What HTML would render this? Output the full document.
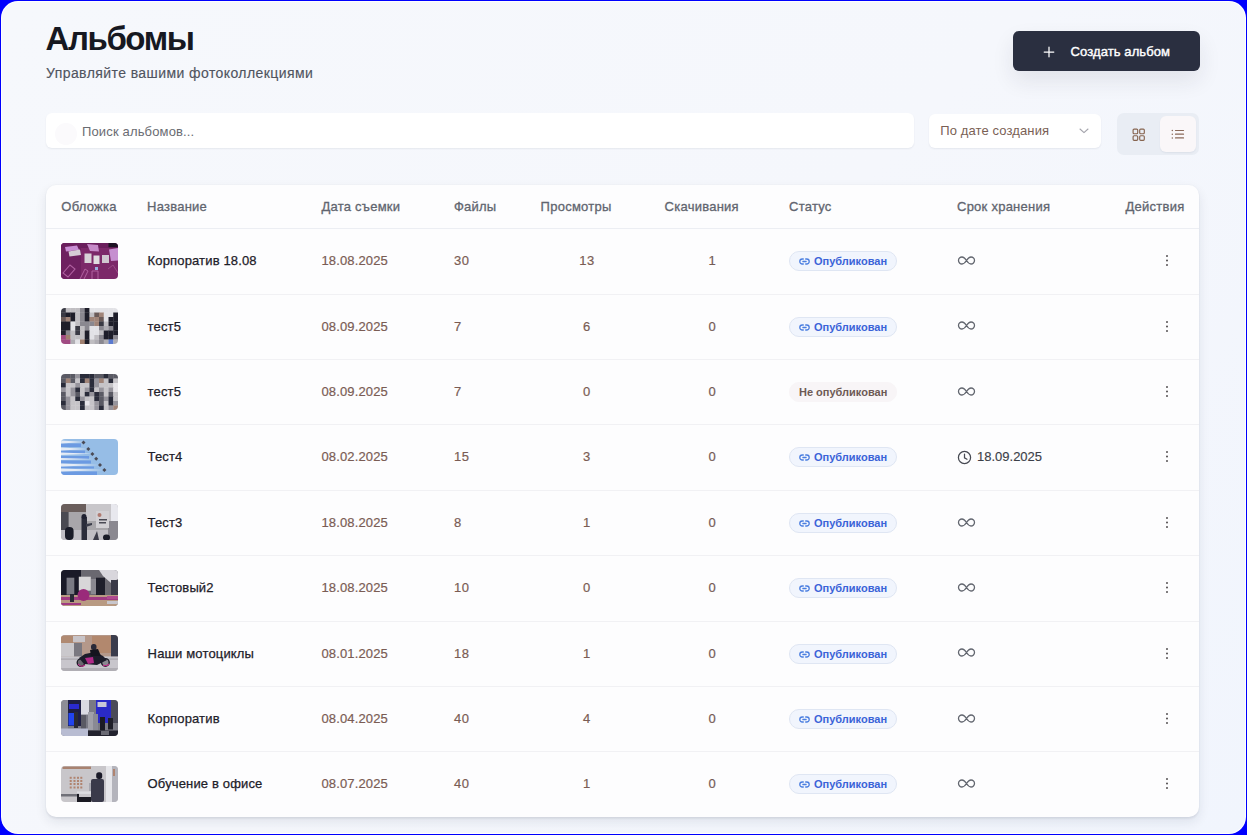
<!DOCTYPE html><html><head><meta charset="utf-8"><style>
*{box-sizing:border-box}
html,body{margin:0;padding:0;width:1247px;height:835px;overflow:hidden;background:#0000fe;font-family:"Liberation Sans",sans-serif}
.frame{position:absolute;left:1px;top:1px;width:1245px;height:833px;border-radius:17px;background:#fff}
.inner{position:absolute;left:2px;top:2px;width:1243px;height:831px;border-radius:16px;background:linear-gradient(135deg,#f6f8fc 0%,#f5f7fc 50%,#f1f5fd 100%)}
h1{position:absolute;margin:0;left:45.5px;top:20px;font-size:33px;font-weight:bold;color:#161821;letter-spacing:-1.4px;line-height:37px;white-space:nowrap}
.sub{position:absolute;left:46px;top:65px;font-size:14px;color:#50545f;-webkit-text-stroke:0.15px #50545f;letter-spacing:0.42px;line-height:16px;white-space:nowrap}
.btn{position:absolute;left:1012.5px;top:31.4px;width:187px;height:39.4px;border-radius:6px;background:#2a2f40;box-shadow:0 10px 22px rgba(30,35,60,.09)}
.btn .plus{position:absolute;left:30.5px;top:14.5px}
.btn span{position:absolute;left:58px;top:13px;color:#fff;font-size:13px;-webkit-text-stroke:0.4px #fff;letter-spacing:0.1px;line-height:15px;white-space:nowrap}
.search{position:absolute;left:46px;top:113px;width:868px;height:35px;border-radius:6px;background:#fff;box-shadow:0 1px 2px rgba(20,30,60,.07)}
.search .ph{position:absolute;left:36px;top:10.8px;font-size:13px;color:#6a6c72;letter-spacing:0.15px;line-height:15px;white-space:nowrap}
.search .ic{position:absolute;left:9px;top:10px;width:21.5px;height:21.5px;border-radius:50%;background:#fbfafc}
.sort{position:absolute;left:929.4px;top:113.7px;width:172px;height:34.3px;border-radius:6px;background:#fff;box-shadow:0 1px 2px rgba(20,30,60,.07)}
.sort span{position:absolute;left:10.8px;top:9.2px;font-size:13px;color:#7a5f55;letter-spacing:0.12px;line-height:15px;white-space:nowrap}
.sort .chev{position:absolute;left:150px;top:14px}
.toggle{position:absolute;left:1117px;top:113px;width:82px;height:42px;border-radius:7px;background:#e9edf4}
.toggle .grid{position:absolute;left:15px;top:14.5px}
.toggle .act{position:absolute;left:43px;top:3px;width:36px;height:36px;border-radius:6px;background:#faf7f9;box-shadow:0 1px 2px rgba(20,30,60,.06)}
.toggle .list{position:absolute;left:10.6px;top:13.3px}
.card{position:absolute;left:46px;top:185.4px;width:1153px;height:631.3px;border-radius:10px;background:#fdfdfe;box-shadow:0 2px 2px rgba(20,30,60,.06),0 5px 12px rgba(20,30,60,.09),0 0 2px rgba(20,30,60,.05);overflow:hidden}
.hdr{position:absolute;left:0;top:0;width:100%;height:43.9px;border-bottom:1px solid #eceef3}
.th{position:absolute;top:13.6px;font-size:13px;color:#61656f;-webkit-text-stroke:0.3px #61656f;letter-spacing:0.25px;line-height:15px;white-space:nowrap}
.row{position:absolute;left:0;width:100%;height:65.375px;border-bottom:1px solid #f1f1f4}
.row.last{border-bottom:none}
.thumb{position:absolute;left:15px;top:13.5px;width:57px;height:36px;border-radius:4px;overflow:hidden}
.thumb svg{display:block}
.td{position:absolute;top:24px;font-size:13px;line-height:15px;white-space:nowrap}
.nm{left:101.6px;color:#1d2029;-webkit-text-stroke:0.25px #1d2029;letter-spacing:0.15px}
.dt{left:275.4px;color:#7a5c54;-webkit-text-stroke:0.2px #7a5c54;letter-spacing:0.15px}
.fl{left:407.9px;color:#7a5c54;-webkit-text-stroke:0.2px #7a5c54;letter-spacing:0.6px}
.vw{left:479px;width:124px;text-align:center;color:#7a5c54;-webkit-text-stroke:0.2px #7a5c54;letter-spacing:0.6px}
.dl{left:604.5px;width:124px;text-align:center;color:#745c56;-webkit-text-stroke:0.2px #745c56;letter-spacing:0.6px}
.pill{position:absolute;left:743px;top:22px;height:20px;border-radius:10px;background:#f1f5fd;border:1px solid #dfe6f3;padding:0 9px 0 9px;white-space:nowrap}
.pill b{display:inline-block;font-size:11px;color:#3a63d8;line-height:18px;vertical-align:top}
.pill svg{display:inline-block;vertical-align:top;margin:6px 4px 0 0}
.pill.np{background:#f8f5f7;border-color:#f8f5f7}
.pill.np b{color:#6e5a55}
.inf{position:absolute;left:911px;top:26.8px;line-height:0}
.clk{position:absolute;left:911px;top:24.5px;line-height:0}
.exp{position:absolute;left:931px;top:24px;font-size:13px;color:#3c3f48;-webkit-text-stroke:0.15px #3c3f48;line-height:15px}
.dots{position:absolute;left:1118.5px;top:25px;line-height:0}

</style></head><body>
<div class="frame"></div><div class="inner"></div>
<h1>Альбомы</h1><div class="sub">Управляйте вашими фотоколлекциями</div>
<div class="btn"><svg class="plus" width="12" height="12" viewBox="0 0 12 12"><path d="M6 1.2 V10.8 M1.2 6 H10.8" stroke="#fff" stroke-width="1.25" stroke-linecap="round"/></svg><span>Создать альбом</span></div>
<div class="search"><div class="ic"></div><span class="ph">Поиск альбомов...</span></div>
<div class="sort"><span>По дате создания</span><svg class="chev" width="10" height="6" viewBox="0 0 10 6"><path d="M1 1 L5 4.6 L9 1" fill="none" stroke="#a4a4ac" stroke-width="1.1" stroke-linecap="round" stroke-linejoin="round"/></svg></div>
<div class="toggle"><svg class="grid" width="14" height="14" viewBox="0 0 14 14"><g fill="none" stroke="#86644f" stroke-width="1.15"><rect x="1.1" y="1.1" width="4.6" height="4.6" rx="1"/><rect x="7.7" y="1.1" width="4.6" height="4.6" rx="1"/><rect x="1.1" y="7.7" width="4.6" height="4.6" rx="1"/><rect x="7.7" y="7.7" width="4.6" height="4.6" rx="1"/></g></svg><div class="act"><svg class="list" width="14" height="10" viewBox="0 0 14 10"><g stroke="#8a6a5a" stroke-width="1.2" stroke-linecap="round"><path d="M4.5 1.5 H12.5 M4.5 5.2 H12.5 M4.5 8.9 H12.5"/></g><g fill="#8a6a5a"><circle cx="1.3" cy="1.5" r="0.75"/><circle cx="1.3" cy="5.2" r="0.75"/><circle cx="1.3" cy="8.9" r="0.75"/></g></svg></div></div>
<div class="card"><div class="hdr">
<span class="th" style="left:15.3px">Обложка</span>
<span class="th" style="left:101px">Название</span>
<span class="th" style="left:275.4px">Дата съемки</span>
<span class="th" style="left:407.9px">Файлы</span>
<span class="th" style="left:494.6px">Просмотры</span>
<span class="th" style="left:618.6px">Скачивания</span>
<span class="th" style="left:743px">Статус</span>
<span class="th" style="left:911px">Срок хранения</span>
<span class="th" style="right:14.5px">Действия</span>
</div>
<div class="row" style="top:43.900px">
<div class="thumb"><svg width="57" height="36" viewBox="0 0 57 36"><rect width="57" height="36" fill="#7c2869"/><rect width="20" height="36" fill="#6e2060"/><rect width="57" height="5" fill="#6a1e5c"/><path d="M4 4 L16 2.5 L18 7 L5 8.5Z" fill="#c98ed4"/><path d="M7.5 8.5 L19 6.5 L20 12 L8.5 13.5Z" fill="#d6ccd6"/><path d="M26 1 L37 2 L38 8.5 L29 8Z" fill="#c68ac8"/><rect x="23.5" y="10.5" width="7" height="9.5" fill="#d8d2d8"/><rect x="32.5" y="12.5" width="6" height="8.5" fill="#e0dce0"/><rect x="41" y="12" width="7" height="8" fill="#d0c6d0"/><path d="M48 6.5 L57 5 L57 17.5 L50 18Z" fill="#c690d0"/><rect x="47.5" y="0" width="9.5" height="4.2" fill="#1c1222"/><path d="M2 30 L9 22 L14 26 L7 34Z" fill="none" stroke="#b060a0" stroke-width="1.1"/><path d="M19 36 L24 26 L27 28 L23 36" fill="none" stroke="#b060a0" stroke-width="1"/><path d="M31 36 V28 H37 V36" fill="none" stroke="#b060a0" stroke-width="1"/><path d="M47 26 L52 22 L57 30" fill="none" stroke="#9a4a88" stroke-width="1"/><rect x="34" y="24" width="3" height="3" fill="#9ab0e0"/></svg></div>
<span class="td nm">Корпоратив 18.08</span><span class="td dt">18.08.2025</span><span class="td fl">30</span><span class="td vw">13</span><span class="td dl">1</span>
<span class="pill"><svg width="11" height="7" viewBox="0 0 11 7"><path d="M4.3 1 H3.3 A2.5 2.5 0 0 0 3.3 6 H4.3 M6.7 1 H7.7 A2.5 2.5 0 0 1 7.7 6 H6.7 M3.9 3.5 H7.1" fill="none" stroke="#4a7ee0" stroke-width="1.3" stroke-linecap="round"/></svg><b>Опубликован</b></span>
<span class="inf"><svg width="19" height="9" viewBox="0 0 19 9"><path d="M9.5 4.5 C8 2.2 6.8 1 5 1 A3.5 3.5 0 0 0 5 8 C6.8 8 8 6.8 9.5 4.5 C11 2.2 12.2 1 14 1 A3.5 3.5 0 0 1 14 8 C12.2 8 11 6.8 9.5 4.5Z" fill="none" stroke="#62666f" stroke-width="1.3"/></svg></span>
<span class="dots"><svg width="4" height="13" viewBox="0 0 4 13"><circle cx="2" cy="2" r="0.95" fill="#4a4648"/><circle cx="2" cy="6.5" r="0.95" fill="#4a4648"/><circle cx="2" cy="11" r="0.95" fill="#4a4648"/></svg></span>
</div>
<div class="row" style="top:109.275px">
<div class="thumb"><svg width="57" height="36" viewBox="0 0 57 36"><rect x="0.00" y="0.00" width="5.05" height="4.80" fill="#3a3a44"/><rect x="4.75" y="0.00" width="5.05" height="4.80" fill="#c0bec2"/><rect x="9.50" y="0.00" width="5.05" height="4.80" fill="#c0bec2"/><rect x="14.25" y="0.00" width="5.05" height="4.80" fill="#c0bec2"/><rect x="19.00" y="0.00" width="5.05" height="4.80" fill="#8a8890"/><rect x="23.75" y="0.00" width="5.05" height="4.80" fill="#1e1e2a"/><rect x="28.50" y="0.00" width="5.05" height="4.80" fill="#e2e2e6"/><rect x="33.25" y="0.00" width="5.05" height="4.80" fill="#e2e2e6"/><rect x="38.00" y="0.00" width="5.05" height="4.80" fill="#e2e2e6"/><rect x="42.75" y="0.00" width="5.05" height="4.80" fill="#e2e2e6"/><rect x="47.50" y="0.00" width="5.05" height="4.80" fill="#e2e2e6"/><rect x="52.25" y="0.00" width="5.05" height="4.80" fill="#e2e2e6"/><rect x="0.00" y="4.50" width="5.05" height="4.80" fill="#3a3a44"/><rect x="4.75" y="4.50" width="5.05" height="4.80" fill="#1e1e2a"/><rect x="9.50" y="4.50" width="5.05" height="4.80" fill="#1e1e2a"/><rect x="14.25" y="4.50" width="5.05" height="4.80" fill="#c0bec2"/><rect x="19.00" y="4.50" width="5.05" height="4.80" fill="#8a8890"/><rect x="23.75" y="4.50" width="5.05" height="4.80" fill="#1e1e2a"/><rect x="28.50" y="4.50" width="5.05" height="4.80" fill="#c0bec2"/><rect x="33.25" y="4.50" width="5.05" height="4.80" fill="#6a5a58"/><rect x="38.00" y="4.50" width="5.05" height="4.80" fill="#a08478"/><rect x="42.75" y="4.50" width="5.05" height="4.80" fill="#e2e2e6"/><rect x="47.50" y="4.50" width="5.05" height="4.80" fill="#e2e2e6"/><rect x="52.25" y="4.50" width="5.05" height="4.80" fill="#1e1e2a"/><rect x="0.00" y="9.00" width="5.05" height="4.80" fill="#6a5a58"/><rect x="4.75" y="9.00" width="5.05" height="4.80" fill="#a08478"/><rect x="9.50" y="9.00" width="5.05" height="4.80" fill="#1e1e2a"/><rect x="14.25" y="9.00" width="5.05" height="4.80" fill="#c0bec2"/><rect x="19.00" y="9.00" width="5.05" height="4.80" fill="#8a8890"/><rect x="23.75" y="9.00" width="5.05" height="4.80" fill="#1e1e2a"/><rect x="28.50" y="9.00" width="5.05" height="4.80" fill="#a08478"/><rect x="33.25" y="9.00" width="5.05" height="4.80" fill="#a08478"/><rect x="38.00" y="9.00" width="5.05" height="4.80" fill="#6a5a58"/><rect x="42.75" y="9.00" width="5.05" height="4.80" fill="#e2e2e6"/><rect x="47.50" y="9.00" width="5.05" height="4.80" fill="#1e1e2a"/><rect x="52.25" y="9.00" width="5.05" height="4.80" fill="#1e1e2a"/><rect x="0.00" y="13.50" width="5.05" height="4.80" fill="#1e1e2a"/><rect x="4.75" y="13.50" width="5.05" height="4.80" fill="#1e1e2a"/><rect x="9.50" y="13.50" width="5.05" height="4.80" fill="#e2e2e6"/><rect x="14.25" y="13.50" width="5.05" height="4.80" fill="#c0bec2"/><rect x="19.00" y="13.50" width="5.05" height="4.80" fill="#8a8890"/><rect x="23.75" y="13.50" width="5.05" height="4.80" fill="#8a8890"/><rect x="28.50" y="13.50" width="5.05" height="4.80" fill="#8a8890"/><rect x="33.25" y="13.50" width="5.05" height="4.80" fill="#a08478"/><rect x="38.00" y="13.50" width="5.05" height="4.80" fill="#3a3a44"/><rect x="42.75" y="13.50" width="5.05" height="4.80" fill="#c0bec2"/><rect x="47.50" y="13.50" width="5.05" height="4.80" fill="#1e1e2a"/><rect x="52.25" y="13.50" width="5.05" height="4.80" fill="#1e1e2a"/><rect x="0.00" y="18.00" width="5.05" height="4.80" fill="#1e1e2a"/><rect x="4.75" y="18.00" width="5.05" height="4.80" fill="#1e1e2a"/><rect x="9.50" y="18.00" width="5.05" height="4.80" fill="#e2e2e6"/><rect x="14.25" y="18.00" width="5.05" height="4.80" fill="#3a3a44"/><rect x="19.00" y="18.00" width="5.05" height="4.80" fill="#c0bec2"/><rect x="23.75" y="18.00" width="5.05" height="4.80" fill="#8a8890"/><rect x="28.50" y="18.00" width="5.05" height="4.80" fill="#e2e2e6"/><rect x="33.25" y="18.00" width="5.05" height="4.80" fill="#e2e2e6"/><rect x="38.00" y="18.00" width="5.05" height="4.80" fill="#8a8890"/><rect x="42.75" y="18.00" width="5.05" height="4.80" fill="#b0aeb4"/><rect x="47.50" y="18.00" width="5.05" height="4.80" fill="#8a8890"/><rect x="52.25" y="18.00" width="5.05" height="4.80" fill="#1e1e2a"/><rect x="0.00" y="22.50" width="5.05" height="4.80" fill="#1e1e2a"/><rect x="4.75" y="22.50" width="5.05" height="4.80" fill="#8a8890"/><rect x="9.50" y="22.50" width="5.05" height="4.80" fill="#c0bec2"/><rect x="14.25" y="22.50" width="5.05" height="4.80" fill="#3a3a44"/><rect x="19.00" y="22.50" width="5.05" height="4.80" fill="#c0bec2"/><rect x="23.75" y="22.50" width="5.05" height="4.80" fill="#1e1e2a"/><rect x="28.50" y="22.50" width="5.05" height="4.80" fill="#e2e2e6"/><rect x="33.25" y="22.50" width="5.05" height="4.80" fill="#e2e2e6"/><rect x="38.00" y="22.50" width="5.05" height="4.80" fill="#c0bec2"/><rect x="42.75" y="22.50" width="5.05" height="4.80" fill="#1e1e2a"/><rect x="47.50" y="22.50" width="5.05" height="4.80" fill="#1e1e2a"/><rect x="52.25" y="22.50" width="5.05" height="4.80" fill="#1e1e2a"/><rect x="0.00" y="27.00" width="5.05" height="4.80" fill="#a04a82"/><rect x="4.75" y="27.00" width="5.05" height="4.80" fill="#a08070"/><rect x="9.50" y="27.00" width="5.05" height="4.80" fill="#c0bec2"/><rect x="14.25" y="27.00" width="5.05" height="4.80" fill="#c0bec2"/><rect x="19.00" y="27.00" width="5.05" height="4.80" fill="#c0bec2"/><rect x="23.75" y="27.00" width="5.05" height="4.80" fill="#1e1e2a"/><rect x="28.50" y="27.00" width="5.05" height="4.80" fill="#e2e2e6"/><rect x="33.25" y="27.00" width="5.05" height="4.80" fill="#c0bec2"/><rect x="38.00" y="27.00" width="5.05" height="4.80" fill="#8a8890"/><rect x="42.75" y="27.00" width="5.05" height="4.80" fill="#1e1e2a"/><rect x="47.50" y="27.00" width="5.05" height="4.80" fill="#1e1e2a"/><rect x="52.25" y="27.00" width="5.05" height="4.80" fill="#8a8890"/><rect x="0.00" y="31.50" width="5.05" height="4.80" fill="#a04a82"/><rect x="4.75" y="31.50" width="5.05" height="4.80" fill="#a04a82"/><rect x="9.50" y="31.50" width="5.05" height="4.80" fill="#b0aeb4"/><rect x="14.25" y="31.50" width="5.05" height="4.80" fill="#e2e2e6"/><rect x="19.00" y="31.50" width="5.05" height="4.80" fill="#a08070"/><rect x="23.75" y="31.50" width="5.05" height="4.80" fill="#1e1e2a"/><rect x="28.50" y="31.50" width="5.05" height="4.80" fill="#c0bec2"/><rect x="33.25" y="31.50" width="5.05" height="4.80" fill="#b0aeb4"/><rect x="38.00" y="31.50" width="5.05" height="4.80" fill="#8a8890"/><rect x="42.75" y="31.50" width="5.05" height="4.80" fill="#b0aeb4"/><rect x="47.50" y="31.50" width="5.05" height="4.80" fill="#5a7ad0"/><rect x="52.25" y="31.50" width="5.05" height="4.80" fill="#b0aeb4"/></svg></div>
<span class="td nm">тест5</span><span class="td dt">08.09.2025</span><span class="td fl">7</span><span class="td vw">6</span><span class="td dl">0</span>
<span class="pill"><svg width="11" height="7" viewBox="0 0 11 7"><path d="M4.3 1 H3.3 A2.5 2.5 0 0 0 3.3 6 H4.3 M6.7 1 H7.7 A2.5 2.5 0 0 1 7.7 6 H6.7 M3.9 3.5 H7.1" fill="none" stroke="#4a7ee0" stroke-width="1.3" stroke-linecap="round"/></svg><b>Опубликован</b></span>
<span class="inf"><svg width="19" height="9" viewBox="0 0 19 9"><path d="M9.5 4.5 C8 2.2 6.8 1 5 1 A3.5 3.5 0 0 0 5 8 C6.8 8 8 6.8 9.5 4.5 C11 2.2 12.2 1 14 1 A3.5 3.5 0 0 1 14 8 C12.2 8 11 6.8 9.5 4.5Z" fill="none" stroke="#62666f" stroke-width="1.3"/></svg></span>
<span class="dots"><svg width="4" height="13" viewBox="0 0 4 13"><circle cx="2" cy="2" r="0.95" fill="#4a4648"/><circle cx="2" cy="6.5" r="0.95" fill="#4a4648"/><circle cx="2" cy="11" r="0.95" fill="#4a4648"/></svg></span>
</div>
<div class="row" style="top:174.650px">
<div class="thumb"><svg width="57" height="36" viewBox="0 0 57 36"><rect x="0.00" y="0.00" width="5.05" height="4.80" fill="#5a5a64"/><rect x="4.75" y="0.00" width="5.05" height="4.80" fill="#5a5a64"/><rect x="9.50" y="0.00" width="5.05" height="4.80" fill="#5a5a64"/><rect x="14.25" y="0.00" width="5.05" height="4.80" fill="#96949c"/><rect x="19.00" y="0.00" width="5.05" height="4.80" fill="#2a2c3a"/><rect x="23.75" y="0.00" width="5.05" height="4.80" fill="#2a2c3a"/><rect x="28.50" y="0.00" width="5.05" height="4.80" fill="#2a2c3a"/><rect x="33.25" y="0.00" width="5.05" height="4.80" fill="#5a5a64"/><rect x="38.00" y="0.00" width="5.05" height="4.80" fill="#5a5a64"/><rect x="42.75" y="0.00" width="5.05" height="4.80" fill="#2a2c3a"/><rect x="47.50" y="0.00" width="5.05" height="4.80" fill="#5a5a64"/><rect x="52.25" y="0.00" width="5.05" height="4.80" fill="#5a5a64"/><rect x="0.00" y="4.50" width="5.05" height="4.80" fill="#5a5a64"/><rect x="4.75" y="4.50" width="5.05" height="4.80" fill="#a08478"/><rect x="9.50" y="4.50" width="5.05" height="4.80" fill="#5a5a64"/><rect x="14.25" y="4.50" width="5.05" height="4.80" fill="#c6c4c8"/><rect x="19.00" y="4.50" width="5.05" height="4.80" fill="#2a2c3a"/><rect x="23.75" y="4.50" width="5.05" height="4.80" fill="#a08478"/><rect x="28.50" y="4.50" width="5.05" height="4.80" fill="#2a2c3a"/><rect x="33.25" y="4.50" width="5.05" height="4.80" fill="#96949c"/><rect x="38.00" y="4.50" width="5.05" height="4.80" fill="#a08478"/><rect x="42.75" y="4.50" width="5.05" height="4.80" fill="#c6c4c8"/><rect x="47.50" y="4.50" width="5.05" height="4.80" fill="#2a2c3a"/><rect x="52.25" y="4.50" width="5.05" height="4.80" fill="#c6c4c8"/><rect x="0.00" y="9.00" width="5.05" height="4.80" fill="#2a2c3a"/><rect x="4.75" y="9.00" width="5.05" height="4.80" fill="#c6c4c8"/><rect x="9.50" y="9.00" width="5.05" height="4.80" fill="#c6c4c8"/><rect x="14.25" y="9.00" width="5.05" height="4.80" fill="#96949c"/><rect x="19.00" y="9.00" width="5.05" height="4.80" fill="#c6c4c8"/><rect x="23.75" y="9.00" width="5.05" height="4.80" fill="#c6c4c8"/><rect x="28.50" y="9.00" width="5.05" height="4.80" fill="#2a2c3a"/><rect x="33.25" y="9.00" width="5.05" height="4.80" fill="#96949c"/><rect x="38.00" y="9.00" width="5.05" height="4.80" fill="#c6c4c8"/><rect x="42.75" y="9.00" width="5.05" height="4.80" fill="#c6c4c8"/><rect x="47.50" y="9.00" width="5.05" height="4.80" fill="#c6c4c8"/><rect x="52.25" y="9.00" width="5.05" height="4.80" fill="#e8e6ea"/><rect x="0.00" y="13.50" width="5.05" height="4.80" fill="#96949c"/><rect x="4.75" y="13.50" width="5.05" height="4.80" fill="#c6c4c8"/><rect x="9.50" y="13.50" width="5.05" height="4.80" fill="#96949c"/><rect x="14.25" y="13.50" width="5.05" height="4.80" fill="#2a2c3a"/><rect x="19.00" y="13.50" width="5.05" height="4.80" fill="#c6c4c8"/><rect x="23.75" y="13.50" width="5.05" height="4.80" fill="#96949c"/><rect x="28.50" y="13.50" width="5.05" height="4.80" fill="#2a2c3a"/><rect x="33.25" y="13.50" width="5.05" height="4.80" fill="#c6c4c8"/><rect x="38.00" y="13.50" width="5.05" height="4.80" fill="#96949c"/><rect x="42.75" y="13.50" width="5.05" height="4.80" fill="#c6c4c8"/><rect x="47.50" y="13.50" width="5.05" height="4.80" fill="#96949c"/><rect x="52.25" y="13.50" width="5.05" height="4.80" fill="#e8e6ea"/><rect x="0.00" y="18.00" width="5.05" height="4.80" fill="#5a5a64"/><rect x="4.75" y="18.00" width="5.05" height="4.80" fill="#c6c4c8"/><rect x="9.50" y="18.00" width="5.05" height="4.80" fill="#96949c"/><rect x="14.25" y="18.00" width="5.05" height="4.80" fill="#5a5a64"/><rect x="19.00" y="18.00" width="5.05" height="4.80" fill="#c6c4c8"/><rect x="23.75" y="18.00" width="5.05" height="4.80" fill="#2a2c3a"/><rect x="28.50" y="18.00" width="5.05" height="4.80" fill="#96949c"/><rect x="33.25" y="18.00" width="5.05" height="4.80" fill="#2a2c3a"/><rect x="38.00" y="18.00" width="5.05" height="4.80" fill="#5a5a64"/><rect x="42.75" y="18.00" width="5.05" height="4.80" fill="#c6c4c8"/><rect x="47.50" y="18.00" width="5.05" height="4.80" fill="#5a5a64"/><rect x="52.25" y="18.00" width="5.05" height="4.80" fill="#c6c4c8"/><rect x="0.00" y="22.50" width="5.05" height="4.80" fill="#5a5a64"/><rect x="4.75" y="22.50" width="5.05" height="4.80" fill="#96949c"/><rect x="9.50" y="22.50" width="5.05" height="4.80" fill="#c6c4c8"/><rect x="14.25" y="22.50" width="5.05" height="4.80" fill="#2a2c3a"/><rect x="19.00" y="22.50" width="5.05" height="4.80" fill="#96949c"/><rect x="23.75" y="22.50" width="5.05" height="4.80" fill="#c6c4c8"/><rect x="28.50" y="22.50" width="5.05" height="4.80" fill="#c6c4c8"/><rect x="33.25" y="22.50" width="5.05" height="4.80" fill="#2a2c3a"/><rect x="38.00" y="22.50" width="5.05" height="4.80" fill="#5a5a64"/><rect x="42.75" y="22.50" width="5.05" height="4.80" fill="#96949c"/><rect x="47.50" y="22.50" width="5.05" height="4.80" fill="#2a2c3a"/><rect x="52.25" y="22.50" width="5.05" height="4.80" fill="#c6c4c8"/><rect x="0.00" y="27.00" width="5.05" height="4.80" fill="#2a2c3a"/><rect x="4.75" y="27.00" width="5.05" height="4.80" fill="#96949c"/><rect x="9.50" y="27.00" width="5.05" height="4.80" fill="#c6c4c8"/><rect x="14.25" y="27.00" width="5.05" height="4.80" fill="#c6c4c8"/><rect x="19.00" y="27.00" width="5.05" height="4.80" fill="#2a2c3a"/><rect x="23.75" y="27.00" width="5.05" height="4.80" fill="#e8e6ea"/><rect x="28.50" y="27.00" width="5.05" height="4.80" fill="#c6c4c8"/><rect x="33.25" y="27.00" width="5.05" height="4.80" fill="#96949c"/><rect x="38.00" y="27.00" width="5.05" height="4.80" fill="#5a5a64"/><rect x="42.75" y="27.00" width="5.05" height="4.80" fill="#c6c4c8"/><rect x="47.50" y="27.00" width="5.05" height="4.80" fill="#2a2c3a"/><rect x="52.25" y="27.00" width="5.05" height="4.80" fill="#96949c"/><rect x="0.00" y="31.50" width="5.05" height="4.80" fill="#5a5a64"/><rect x="4.75" y="31.50" width="5.05" height="4.80" fill="#96949c"/><rect x="9.50" y="31.50" width="5.05" height="4.80" fill="#c6c4c8"/><rect x="14.25" y="31.50" width="5.05" height="4.80" fill="#c6c4c8"/><rect x="19.00" y="31.50" width="5.05" height="4.80" fill="#2a2c3a"/><rect x="23.75" y="31.50" width="5.05" height="4.80" fill="#c6c4c8"/><rect x="28.50" y="31.50" width="5.05" height="4.80" fill="#c6c4c8"/><rect x="33.25" y="31.50" width="5.05" height="4.80" fill="#96949c"/><rect x="38.00" y="31.50" width="5.05" height="4.80" fill="#2a2c3a"/><rect x="42.75" y="31.50" width="5.05" height="4.80" fill="#c6c4c8"/><rect x="47.50" y="31.50" width="5.05" height="4.80" fill="#96949c"/><rect x="52.25" y="31.50" width="5.05" height="4.80" fill="#a08478"/></svg></div>
<span class="td nm">тест5</span><span class="td dt">08.09.2025</span><span class="td fl">7</span><span class="td vw">0</span><span class="td dl">0</span>
<span class="pill np"><b>Не опубликован</b></span>
<span class="inf"><svg width="19" height="9" viewBox="0 0 19 9"><path d="M9.5 4.5 C8 2.2 6.8 1 5 1 A3.5 3.5 0 0 0 5 8 C6.8 8 8 6.8 9.5 4.5 C11 2.2 12.2 1 14 1 A3.5 3.5 0 0 1 14 8 C12.2 8 11 6.8 9.5 4.5Z" fill="none" stroke="#62666f" stroke-width="1.3"/></svg></span>
<span class="dots"><svg width="4" height="13" viewBox="0 0 4 13"><circle cx="2" cy="2" r="0.95" fill="#4a4648"/><circle cx="2" cy="6.5" r="0.95" fill="#4a4648"/><circle cx="2" cy="11" r="0.95" fill="#4a4648"/></svg></span>
</div>
<div class="row" style="top:240.025px">
<div class="thumb"><svg width="57" height="36" viewBox="0 0 57 36"><rect width="57" height="36" fill="#96bde6"/><rect x="0" y="4.5" width="20" height="3.5" fill="#6c9ae2"/><rect x="0" y="11.5" width="24" height="3" fill="#6c9ae2"/><rect x="0" y="17" width="28" height="3" fill="#6c9ae2"/><rect x="0" y="21.5" width="30" height="3" fill="#6c9ae2"/><rect x="0" y="27.5" width="33" height="2" fill="#6c9ae2"/><rect x="0" y="32.5" width="36" height="3.5" fill="#6c9ae2"/><path d="M0 1.5 L23 3.0 L0 4.5Z" fill="#e6ecf6"/><path d="M0 8.5 L27 10.0 L0 11.5Z" fill="#e6ecf6"/><path d="M0 13.5 L31 14.75 L0 16.0Z" fill="#e6ecf6"/><path d="M0 19 L33 20.0 L0 21Z" fill="#e6ecf6"/><path d="M0 24.5 L38 26.0 L0 27.5Z" fill="#e6ecf6"/><path d="M0 29.5 L43 31.0 L0 32.5Z" fill="#e6ecf6"/><path d="M20.5 3.4 L22.5 1.4 L24.5 3.4 L22.5 5.4Z" fill="#4a4a55"/><path d="M25.3 9.9 L27.3 7.9 L29.3 9.9 L27.3 11.9Z" fill="#4a4a55"/><path d="M29.4 15.1 L31.4 13.1 L33.4 15.1 L31.4 17.1Z" fill="#4a4a55"/><path d="M33.2 19.8 L35.2 17.8 L37.2 19.8 L35.2 21.8Z" fill="#4a4a55"/><path d="M37 26 L39 24 L41 26 L39 28Z" fill="#4a4a55"/><path d="M41.4 31 L43.4 29 L45.4 31 L43.4 33Z" fill="#4a4a55"/></svg></div>
<span class="td nm">Тест4</span><span class="td dt">08.02.2025</span><span class="td fl">15</span><span class="td vw">3</span><span class="td dl">0</span>
<span class="pill"><svg width="11" height="7" viewBox="0 0 11 7"><path d="M4.3 1 H3.3 A2.5 2.5 0 0 0 3.3 6 H4.3 M6.7 1 H7.7 A2.5 2.5 0 0 1 7.7 6 H6.7 M3.9 3.5 H7.1" fill="none" stroke="#4a7ee0" stroke-width="1.3" stroke-linecap="round"/></svg><b>Опубликован</b></span>
<span class="clk"><svg width="15" height="15" viewBox="0 0 15 15"><circle cx="7.5" cy="7.5" r="6.1" fill="none" stroke="#464952" stroke-width="1.25"/><path d="M7.5 4 V7.8 L10 9.3" fill="none" stroke="#464952" stroke-width="1.25" stroke-linecap="round"/></svg></span><span class="exp">18.09.2025</span>
<span class="dots"><svg width="4" height="13" viewBox="0 0 4 13"><circle cx="2" cy="2" r="0.95" fill="#4a4648"/><circle cx="2" cy="6.5" r="0.95" fill="#4a4648"/><circle cx="2" cy="11" r="0.95" fill="#4a4648"/></svg></span>
</div>
<div class="row" style="top:305.400px">
<div class="thumb"><svg width="57" height="36" viewBox="0 0 57 36"><rect width="57" height="36" fill="#a8a6aa"/><rect x="0" y="0" width="25" height="8" fill="#6a5e5c"/><rect x="0" y="8" width="7.6" height="18" fill="#4a4a52"/><rect x="25" y="0" width="25" height="17" fill="#c8c6ca"/><rect x="50" y="0" width="7" height="17" fill="#e8e8ee"/><rect x="47" y="17" width="10" height="19" fill="#8a8890"/><rect x="35" y="7" width="13" height="17" fill="#d2d0d4"/><circle cx="38.5" cy="11" r="2" fill="#b07a70"/><rect x="38" y="15" width="8" height="1.5" fill="#4a4a54"/><rect x="38" y="18" width="7" height="1.5" fill="#4a4a54"/><rect x="0" y="26" width="47" height="10" fill="#c0bec4"/><rect x="20.5" y="13" width="5.5" height="23" fill="#2a2c3a"/><circle cx="23" cy="12.5" r="2.5" fill="#1e2030"/><path d="M25 20 L31 19 L31 21 L25 23Z" fill="#3a3c4a"/><rect x="4" y="23" width="8.6" height="13" rx="4" fill="#1a1c28"/><rect x="42" y="30.5" width="7" height="6" rx="3" fill="#1a1c28"/><path d="M32 36 L36 27 L38 36Z" fill="#3a3a48"/></svg></div>
<span class="td nm">Тест3</span><span class="td dt">18.08.2025</span><span class="td fl">8</span><span class="td vw">1</span><span class="td dl">0</span>
<span class="pill"><svg width="11" height="7" viewBox="0 0 11 7"><path d="M4.3 1 H3.3 A2.5 2.5 0 0 0 3.3 6 H4.3 M6.7 1 H7.7 A2.5 2.5 0 0 1 7.7 6 H6.7 M3.9 3.5 H7.1" fill="none" stroke="#4a7ee0" stroke-width="1.3" stroke-linecap="round"/></svg><b>Опубликован</b></span>
<span class="inf"><svg width="19" height="9" viewBox="0 0 19 9"><path d="M9.5 4.5 C8 2.2 6.8 1 5 1 A3.5 3.5 0 0 0 5 8 C6.8 8 8 6.8 9.5 4.5 C11 2.2 12.2 1 14 1 A3.5 3.5 0 0 1 14 8 C12.2 8 11 6.8 9.5 4.5Z" fill="none" stroke="#62666f" stroke-width="1.3"/></svg></span>
<span class="dots"><svg width="4" height="13" viewBox="0 0 4 13"><circle cx="2" cy="2" r="0.95" fill="#4a4648"/><circle cx="2" cy="6.5" r="0.95" fill="#4a4648"/><circle cx="2" cy="11" r="0.95" fill="#4a4648"/></svg></span>
</div>
<div class="row" style="top:370.775px">
<div class="thumb"><svg width="57" height="36" viewBox="0 0 57 36"><rect width="57" height="36" fill="#6a6870"/><rect x="0" y="0" width="20" height="25" fill="#1a1a28"/><path d="M38 0 H57 V9 L50 13 L42 6Z" fill="#d8d6dc"/><rect x="50" y="10" width="7" height="15" fill="#3a3a48"/><rect x="5.6" y="7.7" width="7.7" height="17" fill="#7a7a84"/><rect x="17.8" y="6.7" width="12" height="14" fill="#d8d6d8"/><rect x="35" y="7.7" width="9" height="21" fill="#1e1e2a"/><rect x="30" y="9" width="5" height="15" fill="#8a8890"/><rect x="0" y="25" width="57" height="11" fill="#b89a82"/><rect x="0" y="27" width="57" height="3" fill="#a03a82"/><rect x="0" y="33" width="20" height="2" fill="#a03a82"/><circle cx="22.5" cy="25" r="6" fill="#9a2a7a"/><rect x="9" y="24" width="4" height="8" fill="#2a2a36"/><rect x="46" y="26" width="11" height="3" fill="#b04a90"/><rect x="46" y="31" width="11" height="3" fill="#c8c6cc"/></svg></div>
<span class="td nm">Тестовый2</span><span class="td dt">18.08.2025</span><span class="td fl">10</span><span class="td vw">0</span><span class="td dl">0</span>
<span class="pill"><svg width="11" height="7" viewBox="0 0 11 7"><path d="M4.3 1 H3.3 A2.5 2.5 0 0 0 3.3 6 H4.3 M6.7 1 H7.7 A2.5 2.5 0 0 1 7.7 6 H6.7 M3.9 3.5 H7.1" fill="none" stroke="#4a7ee0" stroke-width="1.3" stroke-linecap="round"/></svg><b>Опубликован</b></span>
<span class="inf"><svg width="19" height="9" viewBox="0 0 19 9"><path d="M9.5 4.5 C8 2.2 6.8 1 5 1 A3.5 3.5 0 0 0 5 8 C6.8 8 8 6.8 9.5 4.5 C11 2.2 12.2 1 14 1 A3.5 3.5 0 0 1 14 8 C12.2 8 11 6.8 9.5 4.5Z" fill="none" stroke="#62666f" stroke-width="1.3"/></svg></span>
<span class="dots"><svg width="4" height="13" viewBox="0 0 4 13"><circle cx="2" cy="2" r="0.95" fill="#4a4648"/><circle cx="2" cy="6.5" r="0.95" fill="#4a4648"/><circle cx="2" cy="11" r="0.95" fill="#4a4648"/></svg></span>
</div>
<div class="row" style="top:436.150px">
<div class="thumb"><svg width="57" height="36" viewBox="0 0 57 36"><rect width="57" height="36" fill="#c4c2c6"/><rect x="0" y="0" width="57" height="21.6" fill="#b4988a"/><rect x="0" y="1" width="12" height="7" fill="#b08a72"/><rect x="12" y="1" width="12" height="6" fill="#c8c4c8"/><rect x="0" y="8" width="13" height="13.6" fill="#cac8cc"/><rect x="13" y="8" width="8" height="13.6" fill="#7a7880"/><rect x="31" y="1" width="20" height="17" fill="#b2886e"/><rect x="50" y="0" width="7" height="21.6" fill="#3a3c4c"/><rect x="0" y="21.6" width="57" height="14.4" fill="#c8c6cc"/><rect x="0" y="23.5" width="57" height="1.2" fill="#a8a6ac"/><rect x="0" y="33" width="57" height="3" fill="#b0aeb4"/><circle cx="20" cy="27.6" r="3.8" fill="#6a6870" stroke="#1a1a24" stroke-width="1.3"/><circle cx="44.4" cy="27.4" r="3.8" fill="#8a8890" stroke="#1a1a24" stroke-width="1.4"/><path d="M18 23 L24 19 L34 17 L42 21 L46 25 L36 30 L23 29Z" fill="#1c1c2a"/><rect x="30" y="9" width="5.5" height="6" rx="2.5" fill="#2a2a38"/><path d="M29 15 L37 14 L40 21 L30 21Z" fill="#14141e"/><path d="M24 23 L32 22 L33 28 L27 29Z" fill="#b02a88"/><path d="M17 29 Q20 33 24 30" fill="none" stroke="#c0308a" stroke-width="1.1"/><path d="M42 30 Q45 32 48 29" fill="none" stroke="#c0308a" stroke-width="1.1"/></svg></div>
<span class="td nm">Наши мотоциклы</span><span class="td dt">08.01.2025</span><span class="td fl">18</span><span class="td vw">1</span><span class="td dl">0</span>
<span class="pill"><svg width="11" height="7" viewBox="0 0 11 7"><path d="M4.3 1 H3.3 A2.5 2.5 0 0 0 3.3 6 H4.3 M6.7 1 H7.7 A2.5 2.5 0 0 1 7.7 6 H6.7 M3.9 3.5 H7.1" fill="none" stroke="#4a7ee0" stroke-width="1.3" stroke-linecap="round"/></svg><b>Опубликован</b></span>
<span class="inf"><svg width="19" height="9" viewBox="0 0 19 9"><path d="M9.5 4.5 C8 2.2 6.8 1 5 1 A3.5 3.5 0 0 0 5 8 C6.8 8 8 6.8 9.5 4.5 C11 2.2 12.2 1 14 1 A3.5 3.5 0 0 1 14 8 C12.2 8 11 6.8 9.5 4.5Z" fill="none" stroke="#62666f" stroke-width="1.3"/></svg></span>
<span class="dots"><svg width="4" height="13" viewBox="0 0 4 13"><circle cx="2" cy="2" r="0.95" fill="#4a4648"/><circle cx="2" cy="6.5" r="0.95" fill="#4a4648"/><circle cx="2" cy="11" r="0.95" fill="#4a4648"/></svg></span>
</div>
<div class="row" style="top:501.525px">
<div class="thumb"><svg width="57" height="36" viewBox="0 0 57 36"><rect width="57" height="36" fill="#7a7a84"/><rect x="0" y="0" width="7" height="30" fill="#8e8e96"/><rect x="7" y="0" width="13" height="26" fill="#1e1e44"/><rect x="8" y="4" width="10" height="5" fill="#2a2ad0"/><rect x="7.5" y="13" width="6" height="12.5" fill="#2244ee"/><rect x="20" y="0" width="8" height="14.5" fill="#dadae2"/><rect x="35" y="0" width="15" height="23" fill="#2a2ac8"/><rect x="36.5" y="2" width="9" height="5" fill="#c8c8d8"/><rect x="50" y="0" width="7" height="23" fill="#4a4a58"/><rect x="27" y="12" width="6" height="18" fill="#a0a0a8"/><rect x="20" y="15" width="5" height="15" fill="#5a5a64"/><rect x="13" y="12" width="4" height="16" fill="#2a2a34"/><rect x="39" y="17" width="5" height="13.5" fill="#1a1a24"/><rect x="47" y="18" width="5" height="11.5" fill="#1e1e28"/><rect x="32" y="14" width="5" height="16" fill="#8a8a94"/><rect x="0" y="28.5" width="27" height="7.5" fill="#b8bcd2"/><rect x="27" y="30.5" width="30" height="5.5" fill="#22222e"/><rect x="40" y="31" width="8" height="4" fill="#6a6a74"/></svg></div>
<span class="td nm">Корпоратив</span><span class="td dt">08.04.2025</span><span class="td fl">40</span><span class="td vw">4</span><span class="td dl">0</span>
<span class="pill"><svg width="11" height="7" viewBox="0 0 11 7"><path d="M4.3 1 H3.3 A2.5 2.5 0 0 0 3.3 6 H4.3 M6.7 1 H7.7 A2.5 2.5 0 0 1 7.7 6 H6.7 M3.9 3.5 H7.1" fill="none" stroke="#4a7ee0" stroke-width="1.3" stroke-linecap="round"/></svg><b>Опубликован</b></span>
<span class="inf"><svg width="19" height="9" viewBox="0 0 19 9"><path d="M9.5 4.5 C8 2.2 6.8 1 5 1 A3.5 3.5 0 0 0 5 8 C6.8 8 8 6.8 9.5 4.5 C11 2.2 12.2 1 14 1 A3.5 3.5 0 0 1 14 8 C12.2 8 11 6.8 9.5 4.5Z" fill="none" stroke="#62666f" stroke-width="1.3"/></svg></span>
<span class="dots"><svg width="4" height="13" viewBox="0 0 4 13"><circle cx="2" cy="2" r="0.95" fill="#4a4648"/><circle cx="2" cy="6.5" r="0.95" fill="#4a4648"/><circle cx="2" cy="11" r="0.95" fill="#4a4648"/></svg></span>
</div>
<div class="row last" style="top:566.900px">
<div class="thumb"><svg width="57" height="36" viewBox="0 0 57 36"><rect width="57" height="36" fill="#c8c6ca"/><rect x="1.5" y="0.5" width="28.5" height="2.5" fill="#a88270"/><rect x="45" y="0" width="6" height="36" fill="#e6e6ea"/><rect x="51" y="0" width="6" height="36" fill="#b4b4bc"/><rect x="52" y="3" width="2" height="7" fill="#b08470"/><rect x="8.7" y="10.8" width="2" height="2" fill="#b08470"/><rect x="8.7" y="14" width="2" height="2" fill="#b08470"/><rect x="8.7" y="17" width="2" height="2" fill="#b08470"/><rect x="8.7" y="20.5" width="2" height="2" fill="#b08470"/><rect x="12.5" y="10.8" width="2" height="2" fill="#b08470"/><rect x="12.5" y="14" width="2" height="2" fill="#b08470"/><rect x="12.5" y="17" width="2" height="2" fill="#b08470"/><rect x="12.5" y="20.5" width="2" height="2" fill="#b08470"/><rect x="16" y="10.8" width="2" height="2" fill="#b08470"/><rect x="16" y="14" width="2" height="2" fill="#b08470"/><rect x="16" y="17" width="2" height="2" fill="#b08470"/><rect x="16" y="20.5" width="2" height="2" fill="#b08470"/><rect x="19.3" y="10.8" width="2" height="2" fill="#b08470"/><rect x="19.3" y="14" width="2" height="2" fill="#b08470"/><rect x="19.3" y="17" width="2" height="2" fill="#b08470"/><rect x="19.3" y="20.5" width="2" height="2" fill="#b08470"/><rect x="28" y="17" width="8" height="8" fill="#a8a8b0"/><rect x="35.2" y="6.2" width="6" height="6.8" rx="2.5" fill="#1a1a28"/><rect x="30" y="13" width="13" height="23" rx="2" fill="#3a3a4a"/><rect x="16" y="25.4" width="14" height="2.5" fill="#dcdce0"/><rect x="16" y="27.9" width="2" height="8" fill="#1a1a22"/><rect x="16" y="31" width="14" height="5" fill="#1a1a22"/><rect x="0" y="28" width="16" height="2.5" fill="#707078"/></svg></div>
<span class="td nm">Обучение в офисе</span><span class="td dt">08.07.2025</span><span class="td fl">40</span><span class="td vw">1</span><span class="td dl">0</span>
<span class="pill"><svg width="11" height="7" viewBox="0 0 11 7"><path d="M4.3 1 H3.3 A2.5 2.5 0 0 0 3.3 6 H4.3 M6.7 1 H7.7 A2.5 2.5 0 0 1 7.7 6 H6.7 M3.9 3.5 H7.1" fill="none" stroke="#4a7ee0" stroke-width="1.3" stroke-linecap="round"/></svg><b>Опубликован</b></span>
<span class="inf"><svg width="19" height="9" viewBox="0 0 19 9"><path d="M9.5 4.5 C8 2.2 6.8 1 5 1 A3.5 3.5 0 0 0 5 8 C6.8 8 8 6.8 9.5 4.5 C11 2.2 12.2 1 14 1 A3.5 3.5 0 0 1 14 8 C12.2 8 11 6.8 9.5 4.5Z" fill="none" stroke="#62666f" stroke-width="1.3"/></svg></span>
<span class="dots"><svg width="4" height="13" viewBox="0 0 4 13"><circle cx="2" cy="2" r="0.95" fill="#4a4648"/><circle cx="2" cy="6.5" r="0.95" fill="#4a4648"/><circle cx="2" cy="11" r="0.95" fill="#4a4648"/></svg></span>
</div>
</div></body></html>
